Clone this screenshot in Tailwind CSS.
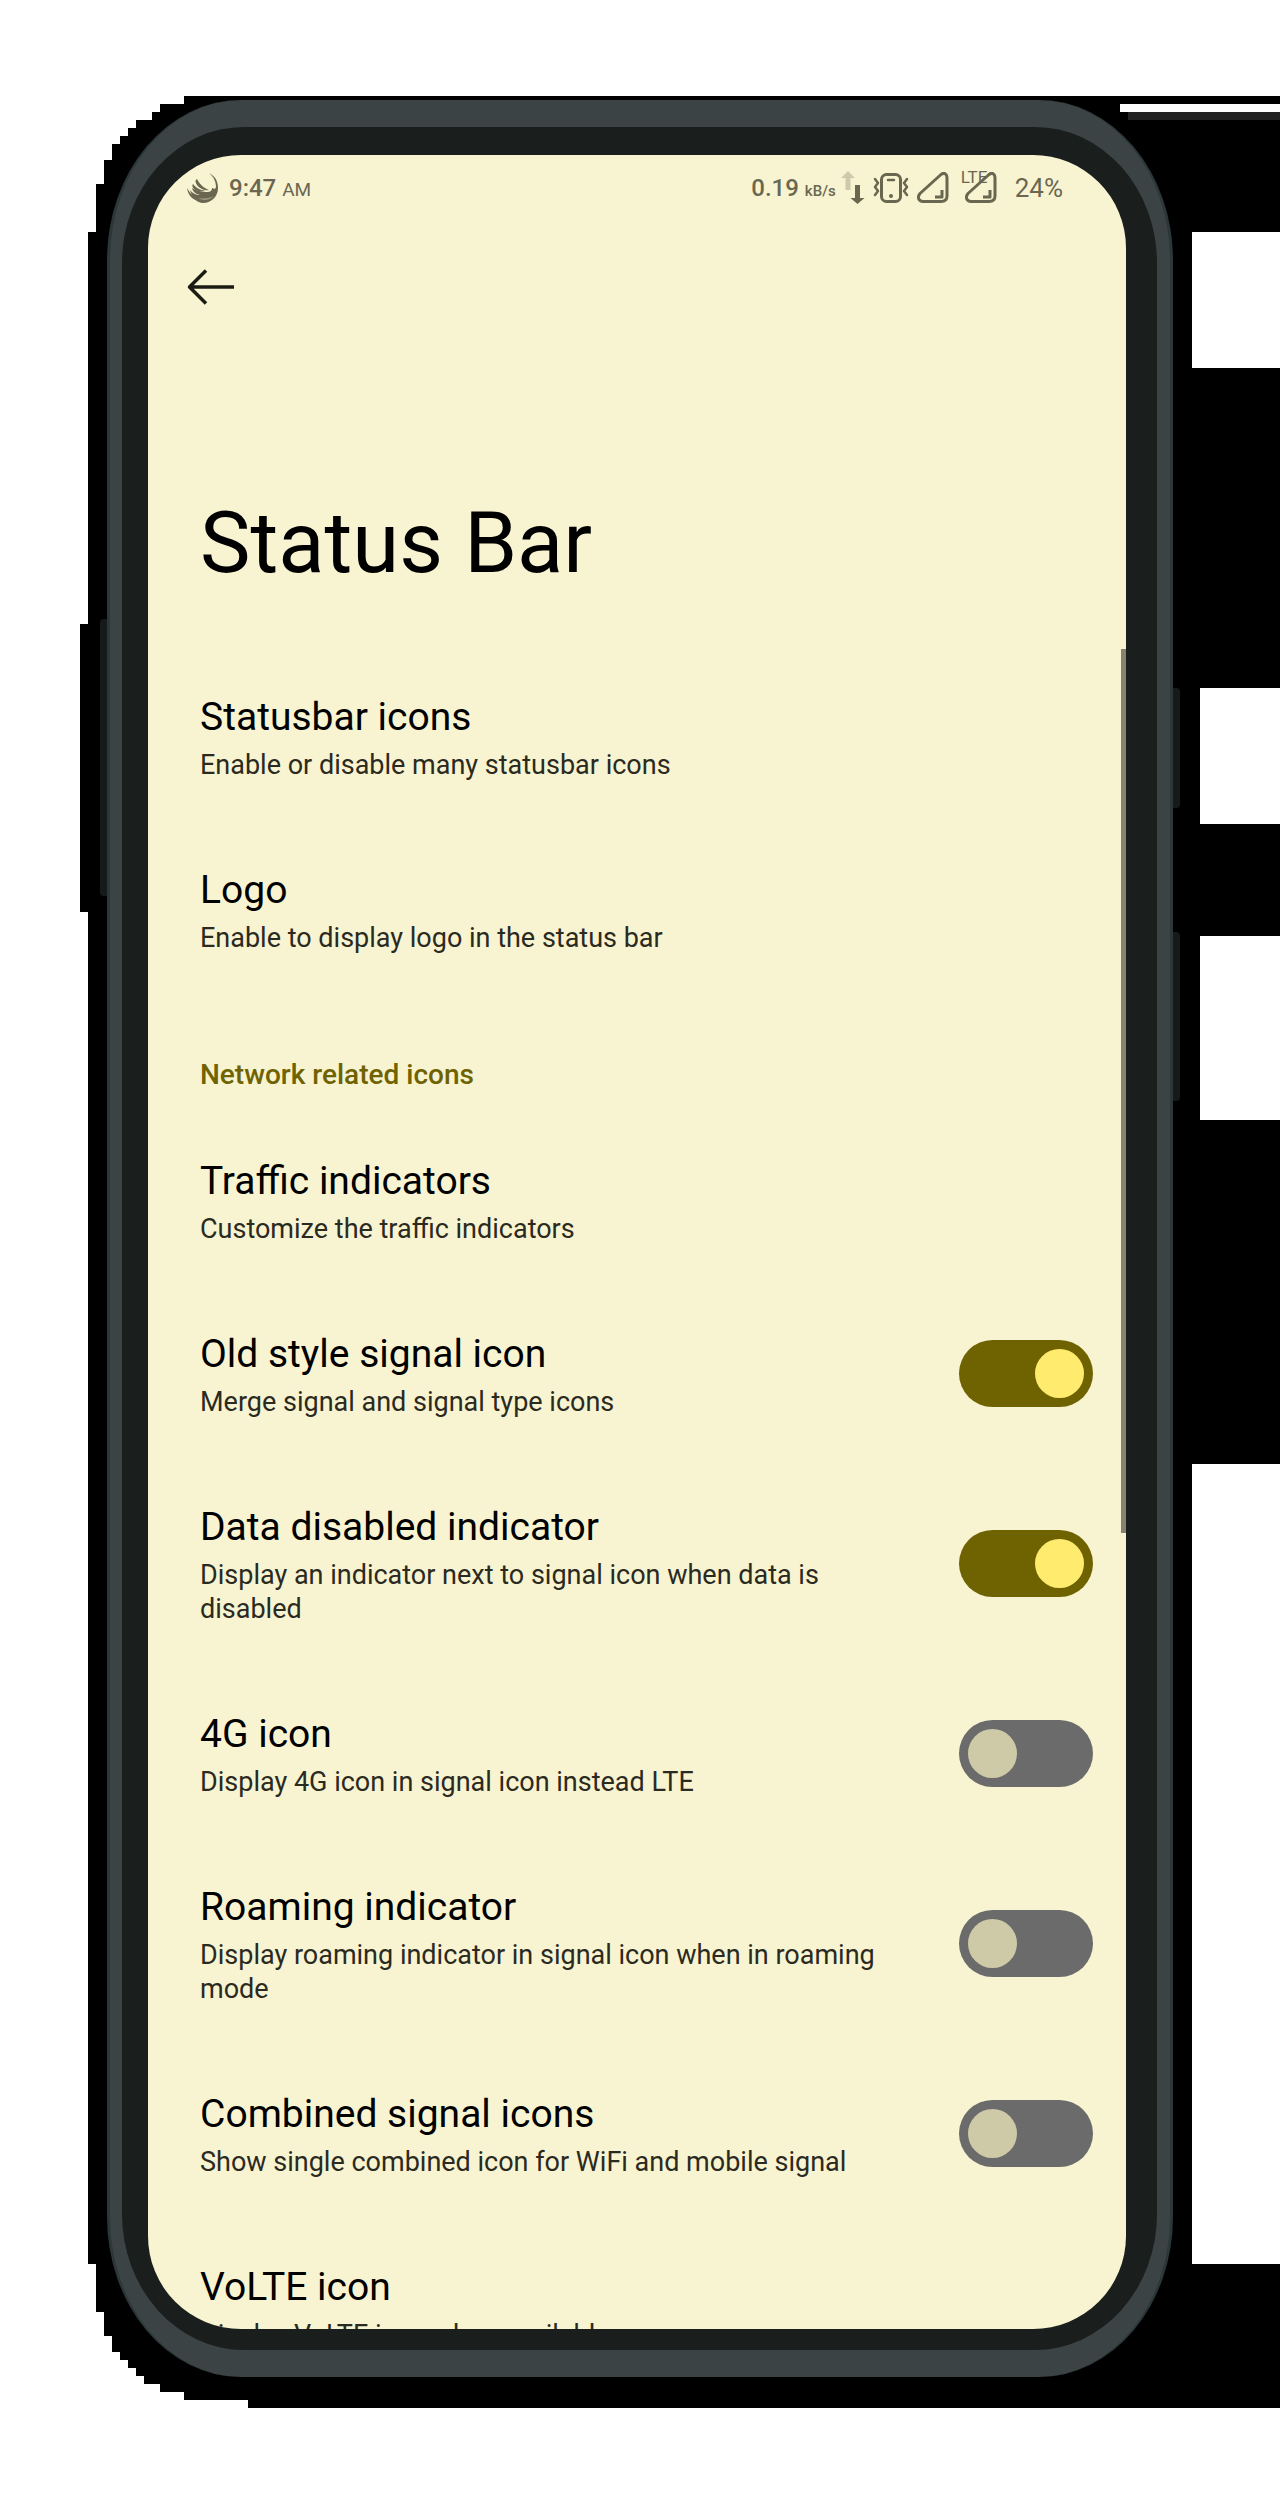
<!DOCTYPE html>
<html lang="en">
<head>
<meta charset="utf-8">
<meta name="viewport" content="width=device-width, initial-scale=1">
<title>Status Bar settings</title>
<script src="https://cdn.jsdelivr.net/npm/@tailwindcss/browser@4"></script>
</head>
<body class="relative min-h-[2500px] overflow-x-hidden bg-white font-['Roboto',sans-serif] text-black">

<!-- Hard-edged shadow behind the phone -->
<svg class="absolute left-0 top-0 h-[2500px] w-full" viewBox="0 0 1280 2500" preserveAspectRatio="none" shape-rendering="crispEdges" aria-hidden="true">
  <path d="M184 96H1280V2408H248V2400H184V2392H160V2384H144V2376H136V2368H128V2360H120V2352H112V2336H104V2312H96V2264H88V912H80V624H88V232H96V184H104V160H112V144H120V136H128V128H136V120H152V112H160V104H184Z" fill="#000"/>
  <path d="M1120 104H1280V112H1120ZM1192 232H1280V368H1192ZM1200 688H1280V824H1200ZM1200 936H1280V1120H1200ZM1192 1464H1280V2264H1192Z" fill="#fff"/>
  <path d="M1128 112H1280V120H1128Z" fill="#222"/>
</svg>

<div class="px-[107px] pt-[100px]">
  <div class="relative">
    <!-- Side keys -->
    <div class="absolute -left-[7px] top-[519px] h-[277px] w-4 rounded bg-[#161a19]"></div>
    <div class="absolute -right-[7px] top-[588px] h-[120px] w-4 rounded bg-[#161a19]"></div>
    <div class="absolute -right-[7px] top-[832px] h-[169px] w-4 rounded bg-[#161a19]"></div>

    <div class="relative rounded-[134px/160px] border-x-[3px] border-[#2b3738] bg-[#3c4345] py-[27px] pl-[12px] pr-[13px]">
      <div class="rounded-[122px/136px] bg-[#1a1e1c] pb-[21px] pl-[26px] pr-[31px] pt-[28px]">
        <main class="relative overflow-hidden rounded-[93px] bg-[#f8f4d2]">

          <header class="flex h-[66px] items-center justify-between pl-[39px] pr-[63px] text-[24px] font-medium text-[#6a6751]">
            <div class="flex items-center">
              <svg class="h-8 w-8" viewBox="0 0 32 32" fill="currentColor" aria-hidden="true">
                <path d="M0 16C1 23 5 28 12 29C6 25 3 21 0 16ZM3 18C5 26 10 31 16 31C25 31 31 24 31 16C31 9 28 4 22 1C27 5 29 10 29 15L28 17L25 16C25 19 23 20 20 20C13 20 8 18 5 16C6 20 9 22 13 23C9 23 5 21 3 18Z"/>
                <path d="M10 7C13 13 17 16 22 18C17 19 12 16 10 13C8 10 8 8 10 7ZM6 12C10 17 14 18 19 19C14 20 9 19 7 17C5 15 5 13 6 12Z"/>
                <path d="M11 26C17 27 23 26 27 24C22 29 16 29 11 26Z" fill="#f8f4d2" opacity=".35"/>
              </svg>
              <span class="ml-[10px]">9:47 <span class="text-[19px] font-normal">AM</span></span>
            </div>
            <div class="flex items-center">
              <span>0.19 <span class="text-[15px]">kB/s</span></span>
              <svg class="ml-[5px] h-[34px] w-6" viewBox="0 0 24 34" fill="currentColor" aria-hidden="true">
                <path d="M7 0L14 7H9.500V19H4.500V7H0Z" opacity=".3"/>
                <path d="M14 14H19V27H23.500L16.500 33L9.500 27H14Z"/>
              </svg>
              <svg class="ml-2 h-8 w-9" viewBox="0 0 36 32" fill="none" stroke="currentColor" stroke-width="3" stroke-linejoin="round" stroke-linecap="round" aria-hidden="true">
                <rect x="8.500" y="2.500" width="19" height="27" rx="5"/>
                <path d="M15 8H21" stroke-width="2.500"/>
                <path d="M2 7L5 11L2 15L5 19L2 23M34 7L31 11L34 15L31 19L34 23" stroke-width="2.500"/>
                <circle cx="18" cy="24" r="2" fill="currentColor" stroke="none"/>
              </svg>
              <svg class="ml-2 h-8 w-8" viewBox="0 0 32 32" fill="none" stroke="currentColor" stroke-width="3" stroke-linejoin="round" aria-hidden="true">
                <path d="M24 2.500L3 21.500C0 25 1.500 29.500 6 29.500H24C28 29.500 30 27.500 30 24V6C30 2 27 0 24 2.500Z"/>
                <path d="M25 18V25H18"/>
              </svg>
              <span class="relative ml-4">
                <svg class="h-8 w-8" viewBox="0 0 32 32" fill="none" stroke="currentColor" stroke-width="3" stroke-linejoin="round" aria-hidden="true">
                  <path d="M24 2.500L3 21.500C0 25 1.500 29.500 6 29.500H24C28 29.500 30 27.500 30 24V6C30 2 27 0 24 2.500Z"/>
                  <path d="M25 18V25H18"/>
                </svg>
                <span class="absolute -left-1 -top-[3px] text-[17px] font-normal leading-4">LTE</span>
              </span>
              <span class="ml-[18px] text-[26px] font-normal">24%</span>
            </div>
          </header>

          <nav class="flex h-[132px] items-center pl-[39px]">
            <button type="button" aria-label="Back">
              <svg class="h-9 w-12" viewBox="0 0 48 36" fill="none" stroke="#1d1c14" stroke-width="3.500" aria-hidden="true">
                <path d="M47 18H2M19 1.500L2.500 18L19 34.500" stroke-linejoin="round"/>
              </svg>
            </button>
          </nav>

          <h1 class="mb-[57px] mt-[140px] pl-[52px] text-[85px] leading-[100px]">Status Bar</h1>

          <a href="#icons" class="block pb-[41px] pl-[52px] pr-[33px] pt-[41px]">
            <span class="block text-[39px] leading-[52px]">Statusbar icons</span>
            <span class="mt-[5px] block text-[27px] leading-[34px] text-[#2b2a20]">Enable or disable many statusbar icons</span>
          </a>
          <a href="#logo" class="block pb-[41px] pl-[52px] pr-[33px] pt-[41px]">
            <span class="block text-[39px] leading-[52px]">Logo</span>
            <span class="mt-[5px] block text-[27px] leading-[34px] text-[#2b2a20]">Enable to display logo in the status bar</span>
          </a>

          <h2 class="pb-[22px] pl-[52px] pt-[62px] text-[28px] font-medium leading-[34px] text-[#6f6200]">Network related icons</h2>

          <a href="#traffic" class="block pb-[41px] pl-[52px] pr-[33px] pt-[41px]">
            <span class="block text-[39px] leading-[52px]">Traffic indicators</span>
            <span class="mt-[5px] block text-[27px] leading-[34px] text-[#2b2a20]">Customize the traffic indicators</span>
          </a>

          <label class="flex items-center gap-16 pl-[52px] pr-[33px]">
            <span class="flex-1 pb-[41px] pt-[41px]">
              <span class="block text-[39px] leading-[52px]">Old style signal icon</span>
              <span class="mt-[5px] block text-[27px] leading-[34px] text-[#2b2a20]">Merge signal and signal type icons</span>
            </span>
            <input type="checkbox" role="switch" checked class="flex h-[67px] w-[134px] shrink-0 appearance-none items-center rounded-full bg-[#6b6b6b] px-[9px] before:size-[49px] before:rounded-full before:bg-[#cecaa8] before:content-[''] checked:justify-end checked:bg-[#6f6200] checked:before:bg-[#ffec6e]">
          </label>
          <label class="flex items-center gap-16 pl-[52px] pr-[33px]">
            <span class="flex-1 pb-[41px] pt-[41px]">
              <span class="block text-[39px] leading-[52px]">Data disabled indicator</span>
              <span class="mt-[5px] block text-[27px] leading-[34px] text-[#2b2a20]">Display an indicator next to signal icon when data is disabled</span>
            </span>
            <input type="checkbox" role="switch" checked class="flex h-[67px] w-[134px] shrink-0 appearance-none items-center rounded-full bg-[#6b6b6b] px-[9px] before:size-[49px] before:rounded-full before:bg-[#cecaa8] before:content-[''] checked:justify-end checked:bg-[#6f6200] checked:before:bg-[#ffec6e]">
          </label>
          <label class="flex items-center gap-16 pl-[52px] pr-[33px]">
            <span class="flex-1 pb-[41px] pt-[41px]">
              <span class="block text-[39px] leading-[52px]">4G icon</span>
              <span class="mt-[5px] block text-[27px] leading-[34px] text-[#2b2a20]">Display 4G icon in signal icon instead LTE</span>
            </span>
            <input type="checkbox" role="switch" class="flex h-[67px] w-[134px] shrink-0 appearance-none items-center rounded-full bg-[#6b6b6b] px-[9px] before:size-[49px] before:rounded-full before:bg-[#cecaa8] before:content-[''] checked:justify-end checked:bg-[#6f6200] checked:before:bg-[#ffec6e]">
          </label>
          <label class="flex items-center gap-16 pl-[52px] pr-[33px]">
            <span class="flex-1 pb-[41px] pt-[41px]">
              <span class="block text-[39px] leading-[52px]">Roaming indicator</span>
              <span class="mt-[5px] block text-[27px] leading-[34px] text-[#2b2a20]">Display roaming indicator in signal icon when in roaming mode</span>
            </span>
            <input type="checkbox" role="switch" class="flex h-[67px] w-[134px] shrink-0 appearance-none items-center rounded-full bg-[#6b6b6b] px-[9px] before:size-[49px] before:rounded-full before:bg-[#cecaa8] before:content-[''] checked:justify-end checked:bg-[#6f6200] checked:before:bg-[#ffec6e]">
          </label>
          <label class="flex items-center gap-16 pl-[52px] pr-[33px]">
            <span class="flex-1 pb-[41px] pt-[41px]">
              <span class="block text-[39px] leading-[52px]">Combined signal icons</span>
              <span class="mt-[5px] block text-[27px] leading-[34px] text-[#2b2a20]">Show single combined icon for WiFi and mobile signal</span>
            </span>
            <input type="checkbox" role="switch" class="flex h-[67px] w-[134px] shrink-0 appearance-none items-center rounded-full bg-[#6b6b6b] px-[9px] before:size-[49px] before:rounded-full before:bg-[#cecaa8] before:content-[''] checked:justify-end checked:bg-[#6f6200] checked:before:bg-[#ffec6e]">
          </label>

          <!-- The last row runs off the bottom of the screen -->
          <a href="#volte" class="block h-[109px] overflow-hidden pl-[52px] pr-[33px] pt-[41px]">
            <span class="block text-[39px] leading-[52px]">VoLTE icon</span>
            <span class="mt-[5px] block text-[27px] leading-[34px] text-[#2b2a20]">Display VoLTE icon when available</span>
          </a>

          <div class="absolute right-0 top-[494px] h-[884px] w-[5px] bg-[#858370]"></div>
        </main>
      </div>
    </div>
  </div>
</div>
</body>
</html>
